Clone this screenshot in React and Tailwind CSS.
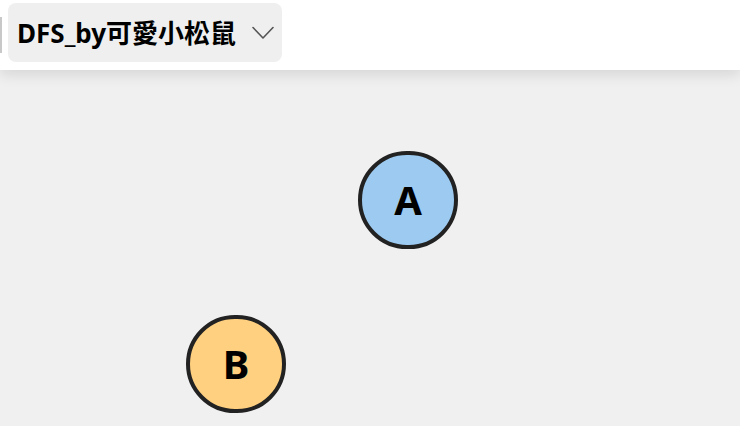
export default function App() {
    const nodes = [
        { id: "A", left: "left-[358px]", top: "top-[81px]", fill: "bg-[#9ccaf0]" },
        { id: "B", left: "left-[186px]", top: "top-[245px]", fill: "bg-[#ffd07f]" },
    ];

    return (
        <div className="w-[740px] h-[426px] flex flex-col bg-[#f0f0f0] overflow-hidden font-['Noto_Sans','Noto_Sans_CJK_TC',sans-serif]">
            <header className="relative z-10 h-[70px] shrink-0 bg-white shadow-[0_4px_14px_rgba(0,0,0,0.12)] flex items-start">
                <div className="mt-[17px] w-[2px] h-[36px] bg-[#c8c8c8]" />
                <button className="ml-[6px] mt-[3px] h-[59px] w-[274px] rounded-lg bg-[#efefef] flex items-center justify-between pl-[9px] pr-[8px]">
                    <span className="text-[26px] font-bold text-black leading-none">
                        DFS_by可愛小松鼠
                    </span>
                    <svg width="22" height="14" viewBox="0 0 22 14" fill="none">
                        <path d="M1 1.5 L11 12 L21 1.5" stroke="#555" strokeWidth="1.6" strokeLinecap="round" strokeLinejoin="round" />
                    </svg>
                </button>
            </header>

            <main className="relative flex-1">
                {nodes.map((n) => (
                    <div
                        key={n.id}
                        className={`absolute ${n.left} ${n.top} w-[100px] h-[98px] rounded-full border-[4px] border-[#222] ${n.fill} flex items-center justify-center`}
                    >
                        <span className="text-[40px] font-bold text-black leading-none">{n.id}</span>
                    </div>
                ))}
            </main>
        </div>
    );
}
